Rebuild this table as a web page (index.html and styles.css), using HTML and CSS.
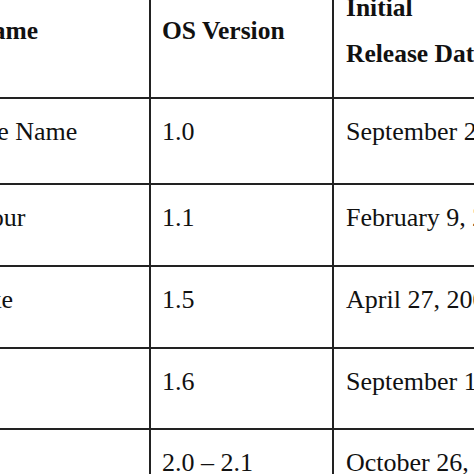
FILE: index.html
```html
<!DOCTYPE html>
<html lang="en">
<head>
<meta charset="utf-8">
<title>Android versions</title>
<link rel="stylesheet" href="styles.css">
</head>
<body>
<div class="table">
  <div class="cell head c1"><span>Codename</span></div>
  <div class="cell head c2"><span>OS Version</span></div>
  <div class="cell head c3"><span>Initial<br>Release Date</span></div>

  <div class="cell c1">Possible Name</div>
  <div class="cell c2">1.0</div>
  <div class="cell c3">September 23, 2008</div>

  <div class="cell c1">Petit Four</div>
  <div class="cell c2">1.1</div>
  <div class="cell c3">February 9, 2009</div>

  <div class="cell c1">Cupcake</div>
  <div class="cell c2">1.5</div>
  <div class="cell c3">April 27, 2009</div>

  <div class="cell c1">Donut</div>
  <div class="cell c2">1.6</div>
  <div class="cell c3">September 15, 2009</div>

  <div class="cell c1">Eclair</div>
  <div class="cell c2">2.0 – 2.1</div>
  <div class="cell c3">October 26, 2009</div>
</div>
</body>
</html>
```

FILE: styles.css
```css
html, body {
  margin: 0;
  padding: 0;
  width: 474px;
  height: 474px;
  overflow: hidden;
  background: #ffffff;
}

.table {
  display: grid;
  grid-template-columns: 240px 183px 220px;
  grid-template-rows: 134px 86px 82px 82px 81px 90px;
  margin-left: -89px;
  margin-top: -35px;
  width: 643px;
  font-family: "Liberation Serif", "Times New Roman", serif;
  color: #111111;
}

.cell {
  box-sizing: border-box;
  border-right: 2px solid #222222;
  border-bottom: 2px solid #222222;
  padding: 18px 11px 0 11px;
  font-size: 26px;
  line-height: 30px;
  white-space: nowrap;
  overflow: hidden;
}

.c3 {
  padding-left: 12px;
}

.head {
  display: flex;
  align-items: center;
  padding-top: 0;
  font-size: 25.5px;
  font-weight: bold;
  line-height: 46px;
}
```
